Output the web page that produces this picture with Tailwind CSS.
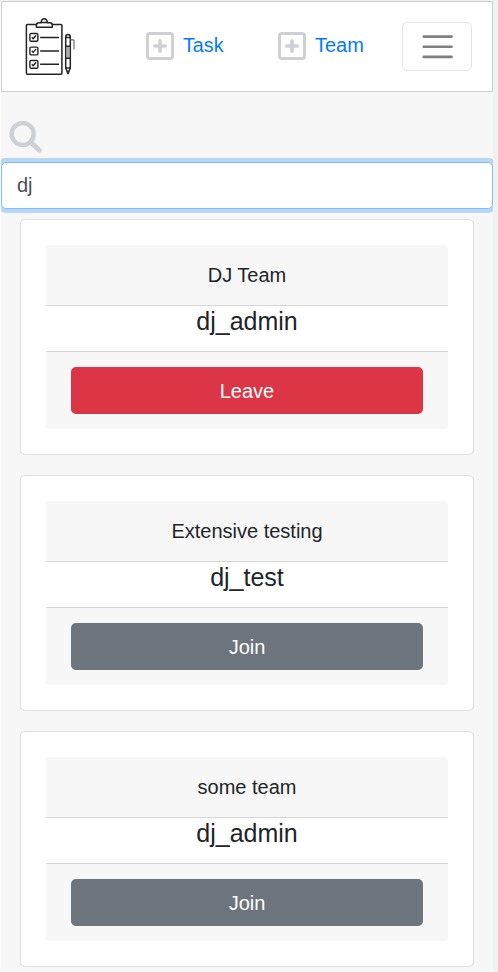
<!DOCTYPE html>
<html lang="en">
<head>
<meta charset="utf-8">
<title>Teams</title>
<script src="https://cdn.jsdelivr.net/npm/@tailwindcss/browser@4"></script>
</head>
<body class="h-[972px] overflow-hidden bg-[#f0f1f1] pt-px font-['Liberation_Sans',Arial,sans-serif] text-[20px] leading-[30px] text-[#212529]">
<div class="h-[971px] w-[493px] overflow-hidden border-l border-[#fdfdfd] bg-[#f7f7f7]">
  <nav class="flex h-[91px] items-start border border-[#d0d0d0] bg-white">
    <svg class="mt-[14px] ml-[22px] h-[60px] w-[52px] shrink-0" viewBox="24 16 52 60" fill="none" stroke="#242424" stroke-width="1.5" stroke-linecap="round" stroke-linejoin="round">
      <rect x="26.4" y="24.6" width="35.5" height="49.6" rx="1"/>
      <path fill="#fff" d="M36.4 27.3v-2.1q0-2.5 2.5-2.5h2.2q.3-3.9 3.1-3.9t3.1 3.9h2.5q2.5 0 2.5 2.5v2.1z"/>
      <path d="M41.2 22.5h6"/>
      <g stroke-width="1.4"><rect x="29.9" y="33.5" width="8" height="7.8" rx="1.2"/><rect x="29.9" y="47.1" width="8" height="7.8" rx="1.2"/><rect x="29.9" y="60.5" width="8" height="7.8" rx="1.2"/>
      <path d="M32.2 37.6l1 1.2 2.5-3M32.2 51.2l1 1.2 2.5-3M32.2 64.6l1 1.2 2.5-3M40.6 37.5h17.9M40.6 51h17.9M40.6 64.2h17.9"/></g>
      <path d="M65.7 68V37q0-2.4 2.3-2.4t2.3 2.4v31zM65.7 37.6h4.6M65.7 46.3h4.6M65.7 58.3h4.6M65.7 68l2.3 5.6 2.3-5.6M68 71.5v2"/>
      <path stroke="#555" stroke-width="1" d="M68 47v10.5M70.5 39.9H74v9.2"/>
    </svg>
    <a class="mt-[28px] ml-[70px] flex w-[132px] items-start gap-[9px] text-[#007bff]">
      <svg class="mt-[2px] size-7 shrink-0" viewBox="0 0 28 28" fill="none" stroke="#ced0d5" stroke-linecap="round"><rect x="1.5" y="1.5" width="25" height="25" rx="2.2" stroke-width="3"/><path stroke-width="3.6" d="M8.8 14h10.4M14 8.8v10.4"/></svg>
      <span class="origin-left scale-x-[.985]">Task</span>
    </a>
    <a class="mt-[28px] flex w-[124px] items-start gap-[9px] text-[#007bff]">
      <svg class="mt-[2px] size-7 shrink-0" viewBox="0 0 28 28" fill="none" stroke="#ced0d5" stroke-linecap="round"><rect x="1.5" y="1.5" width="25" height="25" rx="2.2" stroke-width="3"/><path stroke-width="3.6" d="M8.8 14h10.4M14 8.8v10.4"/></svg>
      <span>Team</span>
    </a>
    <button class="mt-[20px] flex h-[49px] w-[70px] items-center justify-center rounded-[5px] border border-[#e5e5e5]" aria-label="Menu">
      <svg class="h-[38px] w-[38px]" viewBox="-0.5 0.2 30 30"><path stroke="#7f7f7f" stroke-linecap="round" stroke-miterlimit="10" stroke-width="2" d="M4 7h22M4 15h22M4 23h22"/></svg>
    </button>
  </nav>
  <main>
    <svg class="mt-[29px] ml-[8px] h-[32px] w-[33px]" viewBox="-0.4 0 33 32" fill="none" stroke="#ced0d5" stroke-linecap="round"><circle cx="13.3" cy="13" r="11" stroke-width="4.4"/><path stroke-width="4.8" d="M21.5 21.2l8.4 8.1"/></svg>
    <input class="mt-[9px] block h-[47px] w-[492px] rounded-[5px] border border-[#80bdff] bg-white px-[15px] text-[20px] text-[#495057] shadow-[0_0_0_4px_#b6d6fa] outline-none" value="dj" aria-label="Search teams">
    <div id="teams" class="mt-[10px] ml-[19px] flex w-[454px] flex-col gap-5"></div>
  </main>
</div>
<template id="team">
  <article class="h-[236px] shrink-0 rounded-[5px] border border-[#dfdfdf] bg-white p-[25px] text-center">
    <header data-name class="h-[61px] rounded-t-[4px] border-b border-[#d7d7d7] bg-[#f7f7f7] py-[15px]"></header>
    <h5 data-owner class="h-[45px] text-[25px] leading-[30px]"></h5>
    <footer class="h-[78px] rounded-b-[4px] border-t border-[#d7d7d7] bg-[#f7f7f7] px-[25px] pt-[15px]">
      <button data-action class="h-[47px] w-full rounded-[5px] text-white"></button>
    </footer>
  </article>
</template>
<script>
const teams = [
  ['DJ Team', 'dj_admin', 'Leave', 'bg-[#dc3545]'],
  ['Extensive testing', 'dj_test', 'Join', 'bg-[#6c757d]'],
  ['some team', 'dj_admin', 'Join', 'bg-[#6c757d]']
];
for (const [name, owner, action, color] of teams) {
  const card = document.getElementById('team').content.cloneNode(true);
  card.querySelector('[data-name]').textContent = name;
  card.querySelector('[data-owner]').textContent = owner;
  card.querySelector('[data-action]').textContent = action;
  card.querySelector('button').classList.add(color);
  document.getElementById('teams').append(card);
}
</script>
</body>
</html>
